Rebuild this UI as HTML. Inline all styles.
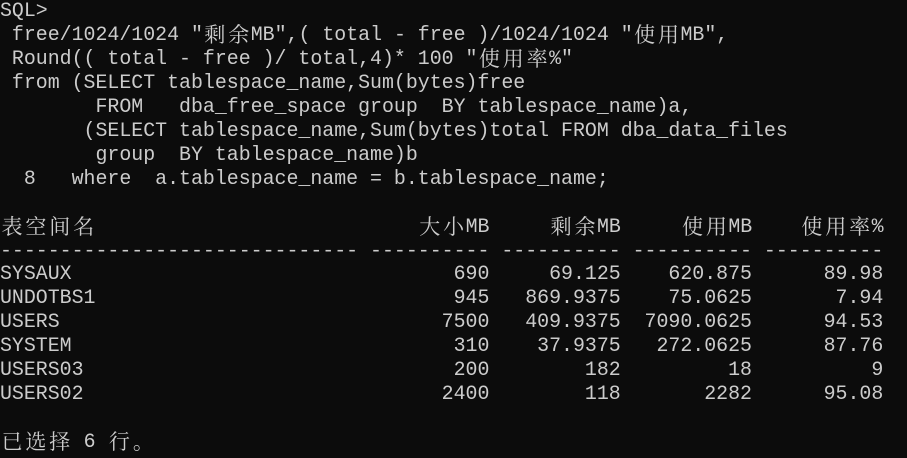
<!DOCTYPE html>
<html><head><meta charset="utf-8"><style>
html,body{margin:0;padding:0;background:#0c0c0c;}
body{width:907px;height:458px;overflow:hidden;position:relative;}
pre{margin:0;position:absolute;left:0;top:-1px;font-family:"Liberation Mono",monospace;font-size:19.9px;line-height:23.95px;color:#cccccc;white-space:pre;}
i{font-style:normal;display:inline-block;width:23.9px;height:23.95px;line-height:23.95px;vertical-align:top;text-align:center;font-family:"Noto Serif CJK SC","Noto Sans CJK SC",serif;font-size:21px;overflow:hidden;}
</style></head><body>
<pre>SQL&gt;
 free/1024/1024 "<i>剩</i><i>余</i>MB",( total - free )/1024/1024 "<i>使</i><i>用</i>MB",
 Round(( total - free )/ total,4)* 100 "<i>使</i><i>用</i><i>率</i>%"
 from (SELECT tablespace_name,Sum(bytes)free
        FROM   dba_free_space group  BY tablespace_name)a,
       (SELECT tablespace_name,Sum(bytes)total FROM dba_data_files
        group  BY tablespace_name)b
  8   where  a.tablespace_name = b.tablespace_name;

<i>表</i><i>空</i><i>间</i><i>名</i>                           <i>大</i><i>小</i>MB     <i>剩</i><i>余</i>MB     <i>使</i><i>用</i>MB    <i>使</i><i>用</i><i>率</i>%
------------------------------ ---------- ---------- ---------- ----------
SYSAUX                                690     69.125    620.875      89.98
UNDOTBS1                              945   869.9375    75.0625       7.94
USERS                                7500   409.9375  7090.0625      94.53
SYSTEM                                310    37.9375   272.0625      87.76
USERS03                               200        182         18          9
USERS02                              2400        118       2282      95.08

<i>已</i><i>选</i><i>择</i> 6 <i>行</i><i>。</i></pre>
</body></html>
